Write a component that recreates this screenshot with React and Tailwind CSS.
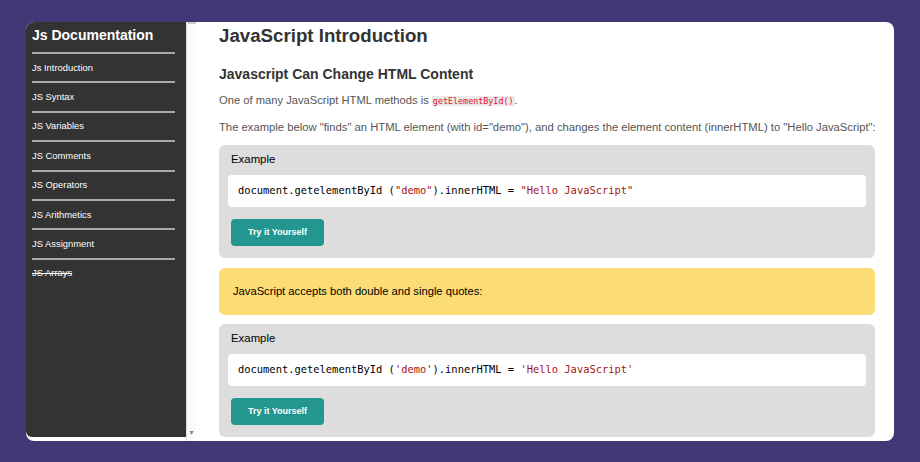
const links = [
    "Js Introduction",
    "JS Syntax",
    "JS Variables",
    "JS Comments",
    "JS Operators",
    "JS Arithmetics",
    "JS Assignment",
]

const ExampleBox = ({ quote }) => {
    return (
        <div className="bg-[#dddddd] rounded-md px-[9px] pt-[7px] pb-[12px]">
            <h3 className="text-[11.4px] text-black leading-[14px] ml-[3px]">Example</h3>
            <div className="bg-white rounded-sm mt-[9px] h-[32px] flex items-center px-[10px] font-['DejaVu_Sans_Mono',monospace] text-[10.43px] text-black whitespace-pre">
                document.getelementById (<span className="text-[#a31515]">{quote}demo{quote}</span>).innerHTML ={" "}<span className="text-[#a31515]">{quote}Hello JavaScript{quote}</span>
            </div>
            <button className="mt-[12px] ml-[3px] w-[93px] h-[27px] bg-[#23968f] rounded-sm text-white text-[9px] font-bold">
                Try it Yourself
            </button>
        </div>
    )
}

const App = () => {
    return (
        <div className="w-[920px] h-[462px] bg-[#443775] pt-[22px] pl-[26px] pr-[26px] pb-[21px] font-['Liberation_Sans',Arial,sans-serif]">
            <div className="h-full bg-white rounded-lg overflow-hidden flex">
                <aside className="w-[160px] h-[415px] bg-[#333333] rounded-bl-md flex flex-col px-[6px] pt-[4px]">
                    <h1 className="text-white text-[14px] font-bold leading-[18px] pb-[8px] border-b-2 border-[#aaaaaa] mr-[5px]">Js Documentation</h1>
                    {links.map((link) => (
                        <a key={link} className="text-white text-[9.4px] leading-[12px] h-[29.4px] flex items-center border-b-2 border-[#aaaaaa] mr-[5px]">
                            {link}
                        </a>
                    ))}
                    <a className="text-white text-[9.4px] leading-[12px] h-[26px] flex items-center line-through">JS Arrays</a>
                </aside>
                <div className="w-[10px] h-full bg-[#fafafa] border-l border-[#dddddd] flex flex-col justify-between items-center pb-[5px]">
                    <span className="w-[8px] h-[2px] bg-[#cccccc] mt-0" />
                    <span className="text-[#888888] text-[7px] leading-none">▼</span>
                </div>
                <main className="flex-1 pl-[23px] pr-[19px] overflow-hidden">
                    <h1 className="text-[#333333] text-[18.7px] font-bold leading-[24px] mt-[2px]">JavaScript Introduction</h1>
                    <h2 className="text-[#333333] text-[14px] font-bold leading-[18px] mt-[17px]">Javascript Can Change HTML Content</h2>
                    <p className="text-[#555555] text-[11.2px] leading-[14px] mt-[10px]">
                        One of many JavaScript HTML methods is <code className="font-['DejaVu_Sans_Mono',monospace] text-[8.4px] text-[#e8102a] bg-[#e9e9e9] px-[1px]">getElementById()</code>.
                    </p>
                    <p className="text-[#555555] text-[11.25px] leading-[14px] mt-[12px] whitespace-nowrap">
                        The example below "finds" an HTML element (with id="demo"), and changes the element content (innerHTML) to "Hello JavaScript":
                    </p>
                    <div className="mt-[11px]">
                        <ExampleBox quote={'"'} />
                    </div>
                    <div className="mt-[10px] bg-[#fcdc74] rounded-md h-[47px] flex items-center px-[14px] text-[11.2px] text-black">
                        JavaScript accepts both double and single quotes:
                    </div>
                    <div className="mt-[9px]">
                        <ExampleBox quote={"'"} />
                    </div>
                </main>
            </div>
        </div>
    )
}
export default App
